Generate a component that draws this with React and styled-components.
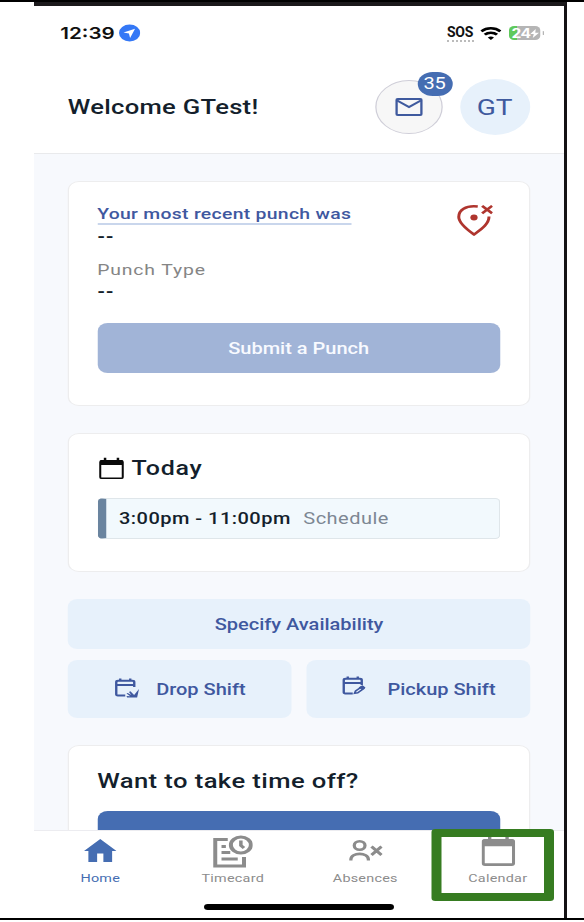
import styled, { createGlobalStyle } from 'styled-components';

const GlobalStyle = createGlobalStyle`
    * {
        box-sizing: border-box;
    }
    body {
        margin: 0;
        background-color: #fff;
        font-family: Roboto, "Liberation Sans", sans-serif;
    }
`;

const Page = styled.div`
    width: 584px;
    height: 920px;
    overflow: hidden;
    border-top: 2px solid #000;
    border-bottom: 2px solid #000;
`;

const Phone = styled.div`
    width: 533px;
    height: 916px;
    margin-left: 34px;
    border-top: 4px solid #1b191b;
    border-right: 3px solid #141214;
    overflow: hidden;
`;

/* the screen is 424 wide and gets stretched sideways */
const Screen = styled.div`
    position: relative;
    width: 424px;
    height: 912px;
    display: flex;
    flex-direction: column;
    transform: scaleX(1.25);
    transform-origin: 0 0;
    background-color: #fff;
    color: #141f2c;
`;

const StatusBar = styled.div`
    height: 54px;
    padding: 0 17px 0 21px;
    display: flex;
    align-items: center;
    justify-content: space-between;
    font-family: Inter, sans-serif;
`;

const StatusGroup = styled.div`
    display: flex;
    align-items: center;
    gap: ${(props) => props.$gap}px;
`;

const Clock = styled.span`
    font-size: 16.5px;
    font-weight: 600;
    color: #111;
`;

const Sos = styled.span`
    width: 27px;
    height: 17px;
    margin: 1px -1px 0 -6px;
    font-family: Roboto, sans-serif;
    font-size: 14px;
    line-height: 14px;
    font-weight: 700;
    letter-spacing: -0.3px;
    color: #111;
    border-bottom: 2px dotted #bbb;
    transform: scaleX(0.8);
    transform-origin: 100% 50%;
`;

const Battery = styled.span`
    position: relative;
    width: 25px;
    height: 14px;
    margin-right: 2px;
    padding-left: 2px;
    display: flex;
    align-items: center;
    border-radius: 4px;
    background: linear-gradient(to right, #5fc95c 26%, #b5b5b5 26%);
    color: #fff;
    font-size: 12.5px;
    font-weight: 700;
    letter-spacing: -0.5px;
    &::after {
        content: '';
        position: absolute;
        right: -3px;
        top: 5px;
        width: 1.5px;
        height: 4px;
        border-radius: 1px;
        background-color: #b5b5b5;
    }
`;

const Header = styled.header`
    height: 94px;
    padding: 0 27.5px 0 27px;
    display: flex;
    align-items: center;
    justify-content: space-between;
    border-bottom: 1.5px solid #e9eaec;
`;

const Title = styled.h1`
    margin: 0;
    font-size: 20.5px;
    font-weight: 500;
    letter-spacing: 0.22px;
`;

const HeaderActions = styled.div`
    display: flex;
    align-items: center;
    gap: 14px;
`;

const Round = styled.button`
    position: relative;
    width: ${(props) => props.$size}px;
    height: ${(props) => props.$size}px;
    padding: 0;
    display: flex;
    align-items: center;
    justify-content: center;
    border: ${(props) => (props.$outlined ? '1px solid #cfced8' : 'none')};
    border-radius: 50%;
    background-color: ${(props) => (props.$outlined ? '#f7f7f7' : '#e7f1fb')};
    color: #3f5a9e;
    font: 400 22.5px Roboto, sans-serif;
`;

const Badge = styled.span`
    position: absolute;
    top: -9px;
    right: -9px;
    width: 28px;
    height: 24px;
    border-radius: 12px;
    background-color: #456db2;
    color: #fff;
    font-size: 16px;
    line-height: 24px;
    text-align: center;
`;

const Content = styled.main`
    height: 676px;
    padding: 27px 27px 0;
    overflow: hidden;
    background-color: #f7f9fd;
`;

const Card = styled.section`
    height: ${(props) => props.$height}px;
    margin-bottom: 27px;
    padding: ${(props) => props.$top}px 23px 0 22.5px;
    border: 1.5px solid #ededee;
    border-radius: 9px;
    background-color: #fff;
`;

const PunchTop = styled.div`
    height: 119px;
    display: flex;
    justify-content: space-between;
`;

const PunchIcon = styled.svg`
    margin: 0 6px 0 0;
`;

const PunchLink = styled.a`
    display: inline-block;
    height: 20px;
    border-bottom: 2px solid #c9d6ec;
    color: #3f589f;
    font-size: 15.5px;
    line-height: 18px;
    font-weight: 500;
    letter-spacing: 0.24px;
`;

const Value = styled.div`
    height: 22px;
    font-size: 16px;
    line-height: 23px;
    font-weight: 700;
    letter-spacing: 0.5px;
`;

const Caption = styled.div`
    height: 19px;
    margin-top: 14px;
    color: #858585;
    font-size: 15.5px;
    line-height: 18px;
    letter-spacing: 0.7px;
`;

const Button = styled.button`
    width: 100%;
    height: ${(props) => props.$height || 50}px;
    padding: 0;
    display: flex;
    align-items: center;
    justify-content: center;
    gap: ${(props) => props.$gap || 0}px;
    border: none;
    border-radius: 8px;
    background-color: ${(props) => props.$bg || '#e7f1fb'};
    color: ${(props) => props.$color || '#3f589f'};
    font: 500 16px Roboto, sans-serif;
`;

const TodayTitle = styled.h2`
    height: 30px;
    margin: 0 0 15px 1.5px;
    display: flex;
    align-items: center;
    gap: 6px;
    font-size: 20px;
    font-weight: 500;
    letter-spacing: 0.6px;
`;

const Shift = styled.div`
    height: 41px;
    padding-left: 10.5px;
    display: flex;
    align-items: center;
    gap: 10px;
    border: 1px solid #dfe6ea;
    border-left: 7px solid #6a849f;
    border-radius: 4px;
    background-color: #f2f9fd;
    font-size: 16px;
    font-weight: 500;
    letter-spacing: 0.38px;
`;

const ShiftKind = styled.span`
    color: #7d8793;
    font-weight: 400;
`;

const ShiftButtons = styled.div`
    margin: 11px 0 27px;
    display: grid;
    grid-template-columns: 1fr 1fr;
    gap: 12px;
`;

const TimeOffTitle = styled.h2`
    height: 30px;
    margin: 0 0 15px;
    font-size: 20.5px;
    line-height: 31px;
    font-weight: 500;
    letter-spacing: 0.33px;
`;

const TabBar = styled.nav`
    height: 70px;
    display: grid;
    grid-template-columns: repeat(4, 1fr);
    border-top: 1px solid #ececf0;
    background-color: #fff;
`;

const Tab = styled.a`
    position: relative;
    display: flex;
    flex-direction: column;
    align-items: center;
    color: ${(props) => (props.$active ? '#456db2' : '#8c8c8c')};
    font-size: 11.5px;
    line-height: 14px;
    letter-spacing: 0.2px;
`;

const TabIcon = styled.span`
    height: 40px;
    padding-top: 4px;
`;

const Highlight = styled.span`
    position: absolute;
    top: -2px;
    left: 0;
    width: 98px;
    height: 72px;
    border: 8px solid #367c21;
    border-radius: 3px;
`;

const HomeIndicator = styled.div`
    width: 152px;
    height: 6px;
    margin: 4px auto 0;
    border-radius: 3px;
    background-color: #000;
`;

function CalendarIcon({ width, height, stroke = 2.4, color = 'currentColor' }) {
    return (
        <svg width={width} height={height} viewBox="0 0 26 30" preserveAspectRatio="none">
            <rect x="1.3" y="5" width="23.4" height="22.8" rx="1.5" fill="none" stroke={color} strokeWidth={stroke} />
            <path d="M1.5 4h23v6.5h-23zM5 1h2.6v4H5zM18.4 1H21v4h-2.6z" fill={color} />
        </svg>
    );
}

function ShiftIcon({ lift, children }) {
    return (
        <svg width="20" height={20 + lift * 2} viewBox={`0 0 20 ${20 + lift * 2}`} fill="none" stroke="currentColor" strokeWidth="1.9">
            <path d="M9 17.5H3Q1.8 17.5 1.8 16.2V4.2Q1.8 2.8 3.2 2.8H14.8Q16.2 2.8 16.2 4.2V9M2 7h14.2M5 0.5v2.5M13 0.5v2.5" />
            {children}
        </svg>
    );
}

function App() {
    return (
        <>
            <GlobalStyle />
            <Page>
                <Phone>
                    <Screen>
                        <StatusBar>
                            <StatusGroup $gap={3}>
                                <Clock>12:39</Clock>
                                <svg width="17" height="18" viewBox="0 0 18 18">
                                    <circle cx="9" cy="9" r="9" fill="#3478f6" />
                                    <path d="M13.6 4.4 3.8 8.6l4.6 1 1 4.6z" fill="#fff" />
                                </svg>
                            </StatusGroup>
                            <StatusGroup $gap={6}>
                                <Sos>SOS</Sos>
                                <svg width="17" height="13" viewBox="0 0 17 13" fill="none" stroke="#000" strokeWidth="2.5">
                                    <path d="M0.9 4.3a11 11 0 0 1 15.2 0M3.6 7.7a7 7 0 0 1 9.8 0" />
                                    <path d="M8.5 13 6 10.6a3.6 3.6 0 0 1 5 0z" fill="#000" stroke="none" />
                                </svg>
                                <Battery>
                                    24
                                    <svg width="7" height="9" viewBox="0 0 7 9">
                                        <path d="M4.4 0 0 5h2.8L2 9l5-5.2H4z" fill="#fff" />
                                    </svg>
                                </Battery>
                            </StatusGroup>
                        </StatusBar>
                        <Header>
                            <Title>Welcome GTest!</Title>
                            <HeaderActions>
                                <Round $size={54} $outlined>
                                    <svg width="22" height="18" viewBox="0 0 22 18" fill="none" stroke="currentColor" strokeWidth="2">
                                        <rect x="1" y="1" width="20" height="16" rx="1" />
                                        <path d="M1.5 2.5 11 9l9.5-6.5" />
                                    </svg>
                                    <Badge>35</Badge>
                                </Round>
                                <Round $size={56}>GT</Round>
                            </HeaderActions>
                        </Header>
                        <Content>
                            <Card $height={225} $top={22}>
                                <PunchTop>
                                    <div>
                                        <PunchLink>Your most recent punch was</PunchLink>
                                        <Value>--</Value>
                                        <Caption>Punch Type</Caption>
                                        <Value>--</Value>
                                    </div>
                                    <PunchIcon width="29" height="33" viewBox="0 0 29 33" fill="none" stroke="#af352e" strokeWidth="2.4">
                                        <path d="M17 2.5C7 1.2 1.8 6.2 1.8 13c0 6 6 12 12.2 17.5C20 25 26 20 26 12.5" />
                                        <path d="M20.5 1.8l8 7.5M28.5 1.8l-8 7.5" />
                                        <circle cx="14" cy="13.5" r="2.9" fill="#af352e" stroke="none" />
                                    </PunchIcon>
                                </PunchTop>
                                <Button $bg="#a1b4d7" $color="#f8faff">Submit a Punch</Button>
                            </Card>
                            <Card $height={139} $top={19}>
                                <TodayTitle>
                                    <CalendarIcon width={20} height={23} stroke={2.1} color="#0a0a0a" />
                                    Today
                                </TodayTitle>
                                <Shift>
                                    3:00pm - 11:00pm
                                    <ShiftKind>Schedule</ShiftKind>
                                </Shift>
                            </Card>
                            <Button>Specify Availability</Button>
                            <ShiftButtons>
                                <Button $height={58} $gap={14}>
                                    <ShiftIcon lift={1}>
                                        <path d="M20 11 18.5 19.5h-8l-.5-1.5 3 .2-3-2.7 1-.6 2.8 2-1.8-3 1.1-.6 3 3.600z" fill="currentColor" stroke="none" />
                                    </ShiftIcon>
                                    Drop Shift
                                </Button>
                                <Button $height={58} $gap={17}>
                                    <ShiftIcon lift={3}>
                                        <path d="M10.5 17.2l.8-2.3 4.7-4 1.8 1.6-4.8 4.2z" strokeWidth="1.5" />
                                        <path d="M14.5 11.5l2.2-1.7 1.8 1.7-2 1.8z" fill="currentColor" strokeWidth="1" />
                                    </ShiftIcon>
                                    Pickup Shift
                                </Button>
                            </ShiftButtons>
                            <Card $height={160} $top={20}>
                                <TimeOffTitle>Want to take time off?</TimeOffTitle>
                                <Button $bg="#456db2" />
                            </Card>
                        </Content>
                        <TabBar>
                            <Tab $active>
                                <TabIcon>
                                    <svg width="26" height="31" viewBox="0 0 26 31">
                                        <path d="M13 4 0 16h3.5v11h7v-8.5h5V27h7V16H26z" fill="currentColor" />
                                    </svg>
                                </TabIcon>
                                Home
                            </Tab>
                            <Tab>
                                <TabIcon>
                                    <svg width="32" height="33" viewBox="0 0 32 33" fill="none" stroke="currentColor" strokeWidth="3.2">
                                        <path d="M12 4.5H2v26.500h23v-9M7 11.5h3.5M7 17.5h7M7 24h13" />
                                        <circle cx="22.5" cy="10" r="8" />
                                        <path d="M22.5 5.5v5l2.5 2.5" strokeWidth="2.8" />
                                    </svg>
                                </TabIcon>
                                Timecard
                            </Tab>
                            <Tab>
                                <TabIcon>
                                    <svg width="27" height="31" viewBox="0 0 27 31" fill="none" stroke="currentColor" strokeWidth="2.6">
                                        <circle cx="8.5" cy="10.5" r="4.3" />
                                        <path d="M1.5 25.5V24.5c0-7.5 14-7.5 14 0v1M18 11.5l8 8.5M26 11.5l-8 8.5" />
                                    </svg>
                                </TabIcon>
                                Absences
                            </Tab>
                            <Tab>
                                <TabIcon>
                                    <CalendarIcon width={27} height={32} />
                                </TabIcon>
                                Calendar
                                <Highlight />
                            </Tab>
                        </TabBar>
                        <HomeIndicator />
                    </Screen>
                </Phone>
            </Page>
        </>
    );
}

export default App;
